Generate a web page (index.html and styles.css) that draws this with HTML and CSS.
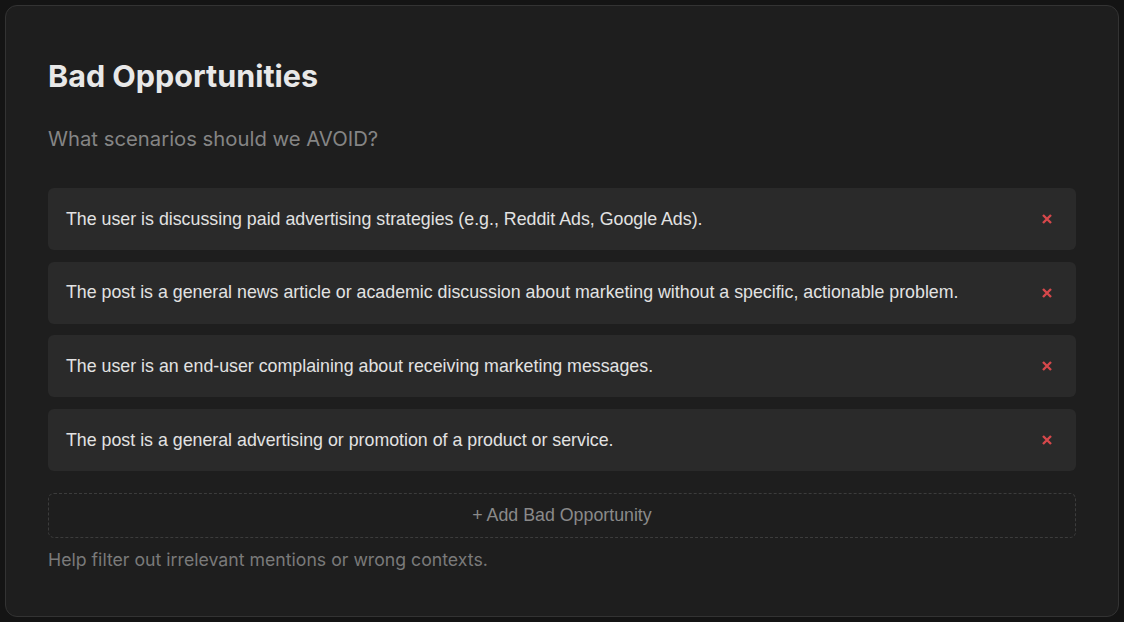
FILE: index.html
```html
<!DOCTYPE html>
<html lang="en">
<head>
<meta charset="utf-8">
<title>Bad Opportunities</title>
<link rel="stylesheet" href="styles.css">
</head>
<body>
<section class="card">
  <h2 class="card-title">Bad Opportunities</h2>
  <p class="card-subtitle">What scenarios should we AVOID?</p>
  <ul class="rule-list">
    <li class="rule">
      <span class="rule-text">The user is discussing paid advertising strategies (e.g., Reddit Ads, Google Ads).</span>
      <button class="rule-remove" aria-label="Remove"><svg viewBox="0 0 10 10" width="10" height="10"><path d="M1 1L9 9M9 1L1 9"/></svg></button>
    </li>
    <li class="rule">
      <span class="rule-text">The post is a general news article or academic discussion about marketing without a specific, actionable problem.</span>
      <button class="rule-remove" aria-label="Remove"><svg viewBox="0 0 10 10" width="10" height="10"><path d="M1 1L9 9M9 1L1 9"/></svg></button>
    </li>
    <li class="rule">
      <span class="rule-text">The user is an end-user complaining about receiving marketing messages.</span>
      <button class="rule-remove" aria-label="Remove"><svg viewBox="0 0 10 10" width="10" height="10"><path d="M1 1L9 9M9 1L1 9"/></svg></button>
    </li>
    <li class="rule">
      <span class="rule-text">The post is a general advertising or promotion of a product or service.</span>
      <button class="rule-remove" aria-label="Remove"><svg viewBox="0 0 10 10" width="10" height="10"><path d="M1 1L9 9M9 1L1 9"/></svg></button>
    </li>
  </ul>
  <button class="add-rule">+ Add Bad Opportunity</button>
  <p class="card-help">Help filter out irrelevant mentions or wrong contexts.</p>
</section>
</body>
</html>
```
FILE: styles.css
```css
* {
  box-sizing: border-box;
}

html, body {
  margin: 0;
  padding: 0;
  background: #141414;
}

body {
  padding: 5px 5px 0;
  font-family: Inter, "Liberation Sans", sans-serif;
}

.card {
  background: #1e1e1e;
  border: 1px solid #333333;
  border-radius: 12px;
  padding: 53px 42px 44px;
  display: flex;
  flex-direction: column;
}

.card-title {
  margin: 0;
  font-size: 30.5px;
  line-height: 34px;
  font-weight: 700;
  color: #e8e8e8;
}

.card-subtitle {
  margin: 34px 0 0;
  font-size: 20.3px;
  line-height: 24px;
  color: #858585;
}

.rule-list {
  list-style: none;
  margin: 37px 0 0;
  padding: 0;
  display: flex;
  flex-direction: column;
  gap: 11.7px;
}

.rule {
  height: 62px;
  background: #2a2a2a;
  border-radius: 6px;
  padding: 0 22px 0 18px;
  display: flex;
  align-items: center;
  justify-content: space-between;
}

.rule-text {
  font-family: "Liberation Sans", Arial, sans-serif;
  font-size: 17.8px;
  color: #e2e2e2;
}

.rule-remove {
  background: none;
  border: 0;
  padding: 2px;
  display: flex;
  cursor: pointer;
}

.rule-remove path {
  stroke: #d6484b;
  stroke-width: 2.4;
  fill: none;
}

.add-rule {
  margin-top: 22px;
  height: 45px;
  background: transparent;
  border: 1px dashed #3c3c3c;
  border-radius: 6px;
  font-family: "Liberation Sans", Arial, sans-serif;
  font-size: 17.8px;
  color: #8a8a8a;
  cursor: pointer;
}

.card-help {
  margin: 10px 0 0;
  font-size: 17.7px;
  line-height: 24px;
  color: #7a7a7a;
}
```
